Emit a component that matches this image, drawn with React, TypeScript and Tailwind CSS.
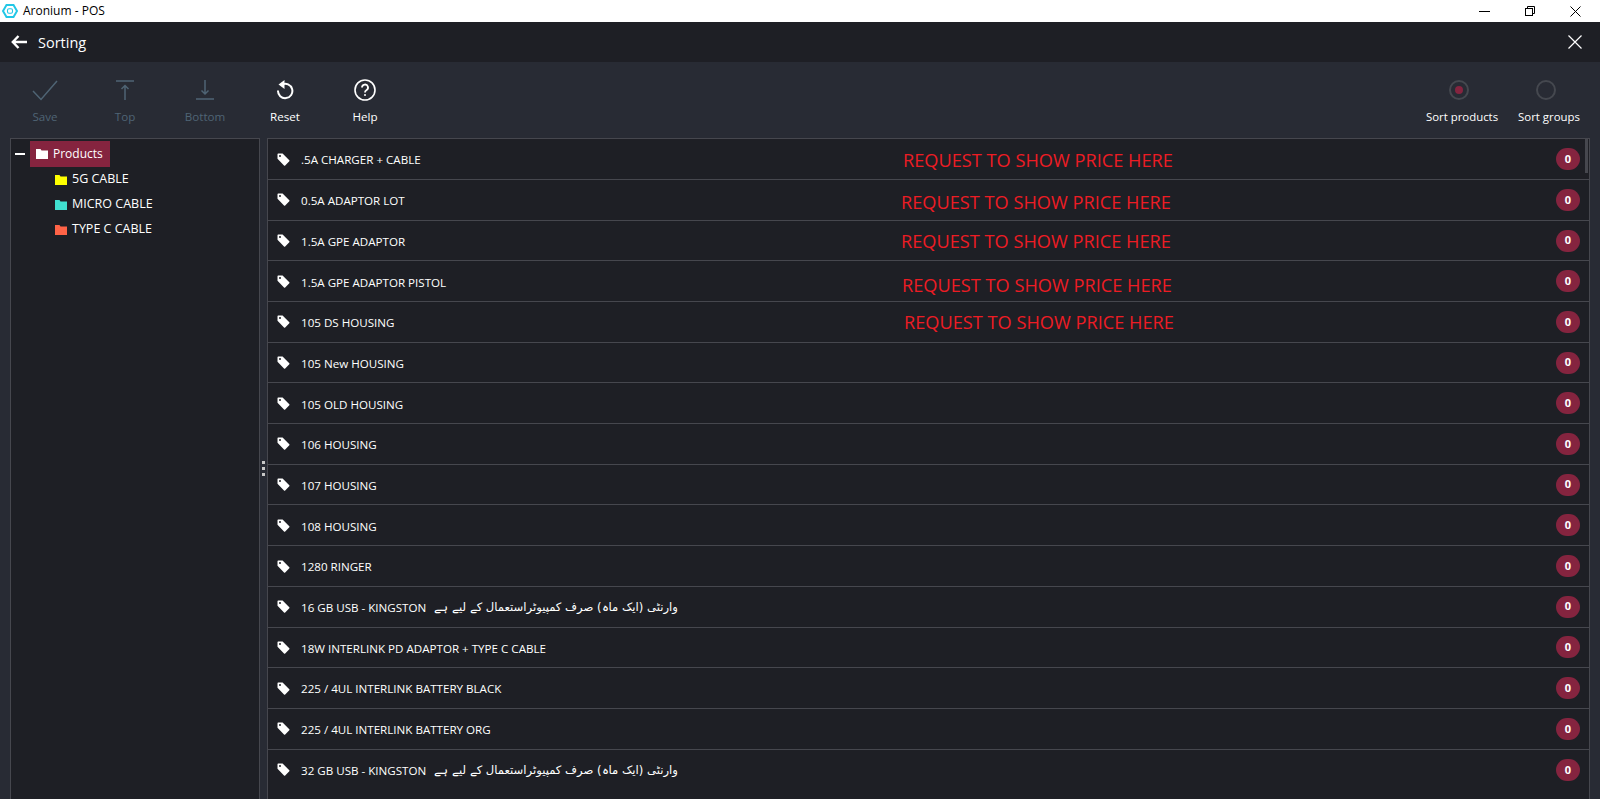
import * as React from 'react';

const URDU = 'وارنٹی (ایک ماہ) صرف کمپیوٹراستعمال کے لیے ہے';

const products: { name: string; note?: boolean }[] = [
    { name: '.5A CHARGER + CABLE' },
    { name: '0.5A ADAPTOR LOT' },
    { name: '1.5A GPE ADAPTOR' },
    { name: '1.5A GPE ADAPTOR PISTOL' },
    { name: '105 DS HOUSING' },
    { name: '105 New HOUSING' },
    { name: '105 OLD HOUSING' },
    { name: '106 HOUSING' },
    { name: '107 HOUSING' },
    { name: '108 HOUSING' },
    { name: '1280 RINGER' },
    { name: '16 GB USB - KINGSTON', note: true },
    { name: '18W INTERLINK PD ADAPTOR + TYPE C CABLE' },
    { name: '225 / 4UL INTERLINK BATTERY BLACK' },
    { name: '225 / 4UL INTERLINK BATTERY ORG' },
    { name: '32 GB USB - KINGSTON', note: true },
];

// red annotations pasted over the list in the screenshot
const overlays = [
    { left: 'left-[903px]', top: 'top-[148px]' },
    { left: 'left-[901px]', top: 'top-[190px]' },
    { left: 'left-[901px]', top: 'top-[229px]' },
    { left: 'left-[902px]', top: 'top-[273px]' },
    { left: 'left-[904px]', top: 'top-[310px]' },
];

function FolderIcon({ className }: { className: string }) {
    return (
        <svg width="12" height="10" viewBox="0 0 12 10" className={className}>
            <path d="M0 0h4.5l1 1.5H12V10H0z" fill="currentColor" />
        </svg>
    );
}

function TagIcon() {
    return (
        <svg width="13" height="13" viewBox="0 0 13 13" className="shrink-0 text-white">
            <path
                d="M0.5 1.2 Q0.5 0.5 1.2 0.5 H5.6 L12.3 7.2 Q12.8 7.8 12.3 8.3 L8.2 12.4 Q7.6 12.9 7 12.4 L0.5 5.8 Z M3 2 A1 1 0 1 0 3 4 A1 1 0 1 0 3 2 Z"
                fill="currentColor"
                fillRule="evenodd"
            />
        </svg>
    );
}

function SaveIcon() {
    return (
        <svg width="26" height="21" viewBox="0 0 26 21" fill="none" stroke="currentColor" strokeWidth="1.5">
            <path d="M1 11 L9 19.5 L25 1" />
        </svg>
    );
}

function TopIcon() {
    return (
        <svg width="18" height="20" viewBox="0 0 18 20" fill="none" stroke="currentColor" strokeWidth="1.5">
            <path d="M0 1 H18" />
            <path d="M9 20 V5.5 M5.5 9 L9 5.5 L12.5 9" />
        </svg>
    );
}

function BottomIcon() {
    return (
        <svg width="18" height="20" viewBox="0 0 18 20" fill="none" stroke="currentColor" strokeWidth="1.5">
            <path d="M0 19 H18" />
            <path d="M9 0 V14 M5.5 10.5 L9 14 L12.5 10.5" />
        </svg>
    );
}

function ResetIcon() {
    return (
        <svg width="18" height="20" viewBox="0 0 18 20">
            <path d="M6 4.5 A7.2 7.2 0 1 1 2 10.5" fill="none" stroke="currentColor" strokeWidth="2" />
            <path d="M8.5 0 V9 L2.5 4.5 Z" fill="currentColor" />
        </svg>
    );
}

function HelpIcon() {
    return (
        <svg width="22" height="22" viewBox="0 0 22 22" fill="none" stroke="currentColor" strokeWidth="1.6">
            <circle cx="11" cy="11" r="10" />
            <path d="M8 8.6 A3 3 0 1 1 12.4 11.2 Q11 12 11 13.4" strokeWidth="1.8" />
            <circle cx="11" cy="16" r="1" fill="currentColor" stroke="none" />
        </svg>
    );
}

function ToolButton({ icon, label, disabled }: { icon: React.ReactNode; label: string; disabled?: boolean }) {
    return (
        <div className={`flex w-20 flex-col items-center ${disabled ? 'text-[#4f6474]' : 'text-white'}`}>
            <div className="flex h-[22px] items-center justify-center">{icon}</div>
            <span className="mt-[8px] text-[11.6px] font-medium leading-4">{label}</span>
        </div>
    );
}

function RadioButton({ label, checked, className }: { label: string; checked?: boolean; className: string }) {
    return (
        <div className={`mt-[1px] flex flex-col items-center text-white ${className}`}>
            <div className="mr-[6px] flex h-5 w-5 items-center justify-center rounded-full border-2 border-[#45484f]">
                {checked ? <div className="h-2 w-2 rounded-full bg-[#85243f]" /> : null}
            </div>
            <span className="mt-[9px] text-[11.4px] leading-4">{label}</span>
        </div>
    );
}

function TreeChild({ name, color }: { name: string; color: string }) {
    return (
        <div className="flex h-[25px] items-center pl-[44px]">
            <FolderIcon className={color} />
            <span className="ml-[5px] text-[12.5px] text-white">{name}</span>
        </div>
    );
}

function ProductRow({ name, note, last }: { name: string; note?: boolean; last?: boolean }) {
    return (
        <div
            className={`relative flex h-[40.7px] shrink-0 items-center pl-[9px] pr-[9px] ${
                last ? '' : 'border-b border-[#46474e]'
            }`}
        >
            <div className="flex w-[24px] shrink-0">
                <TagIcon />
            </div>
            <span className="mt-[2px] text-[11.6px] text-white">{name}</span>
            {note ? (
                <span dir="rtl" className="ml-[8px] mt-[2px] font-['DejaVu_Sans',sans-serif] text-[11.6px] text-white">
                    {URDU}
                </span>
            ) : null}
            <div className="ml-auto flex h-[22px] w-6 items-center justify-center rounded-full bg-[#85243f] text-[11px] font-bold text-white">
                0
            </div>
        </div>
    );
}

export default function App() {
    return (
        <div className="relative flex h-[799px] w-[1600px] flex-col overflow-hidden bg-[#282b34] font-['Open_Sans',sans-serif]">
            <div className="flex h-[22px] shrink-0 items-center bg-white pl-[2px] text-black">
                <svg width="16" height="14" viewBox="0 0 16 14" className="text-[#22c7e6]">
                    <path d="M4.5 1 H11.5 L15 7 L11.5 13 H4.5 L1 7 Z" fill="none" stroke="currentColor" strokeWidth="2" />
                    <rect x="5.5" y="4.7" width="5" height="4.6" rx="1.5" fill="none" stroke="currentColor" strokeWidth="1.1" />
                </svg>
                <span className="ml-[5px] text-[12px]">Aronium - POS</span>
                <div className="ml-auto flex items-center">
                    <svg width="11" height="11" viewBox="0 0 11 11" className="mr-[35px] stroke-black" fill="none">
                        <path d="M0 5.5 H11" />
                    </svg>
                    <svg width="10" height="10" viewBox="0 0 10 10" className="mr-[35px] stroke-black" fill="none">
                        <rect x="0.5" y="2.5" width="7" height="7" />
                        <path d="M2.5 2.5 V0.5 H9.5 V7.5 H7.5" />
                    </svg>
                    <svg width="11" height="11" viewBox="0 0 11 11" className="mr-[19px] stroke-black" fill="none">
                        <path d="M0.5 0.5 L10.5 10.5 M10.5 0.5 L0.5 10.5" />
                    </svg>
                </div>
            </div>

            <div className="flex h-[40px] shrink-0 items-center bg-[#1e1f25] pl-[11px] pr-[18px] text-white">
                <svg width="16" height="14" viewBox="0 0 16 14" fill="none" stroke="currentColor" strokeWidth="2.4">
                    <path d="M16 7 H2 M7.5 1 L1.8 7 L7.5 13" />
                </svg>
                <span className="ml-[11px] mt-[2px] text-[14.5px]">Sorting</span>
                <svg width="14" height="14" viewBox="0 0 14 14" fill="none" stroke="currentColor" className="ml-auto" strokeWidth="1.2">
                    <path d="M0.5 0.5 L13.5 13.5 M13.5 0.5 L0.5 13.5" />
                </svg>
            </div>

            <div className="flex h-[76px] shrink-0 items-start pl-[5px] pt-[17px]">
                <ToolButton label="Save" disabled icon={<SaveIcon />} />
                <ToolButton label="Top" disabled icon={<TopIcon />} />
                <ToolButton label="Bottom" disabled icon={<BottomIcon />} />
                <ToolButton label="Reset" icon={<ResetIcon />} />
                <ToolButton label="Help" icon={<HelpIcon />} />
                <RadioButton label="Sort products" checked className="ml-auto mr-[2px] w-[90px]" />
                <RadioButton label="Sort groups" className="mr-[11px] w-[80px]" />
            </div>

            <div className="flex min-h-0 flex-1 pl-[10px] pr-[10px]">
                <div className="w-[250px] shrink-0 border-l border-r border-t border-[#46474e] bg-[#1e1f25] pt-[2px]">
                    <div className="flex items-center">
                        <div className="ml-[4px] h-[2px] w-[10px] bg-white" />
                        <div className="ml-[5px] flex h-[26px] w-[80px] items-center bg-[#85243f] pl-[6px] text-white">
                            <FolderIcon className="text-white" />
                            <span className="ml-[5px] text-xs">Products</span>
                        </div>
                    </div>
                    <TreeChild name="5G CABLE" color="text-[#ffff00]" />
                    <TreeChild name="MICRO CABLE" color="text-[#40e0d0]" />
                    <TreeChild name="TYPE C CABLE" color="text-[#ff6347]" />
                </div>

                <div className="flex w-[7px] shrink-0 flex-col items-center justify-center gap-[3px]">
                    <div className="h-[3px] w-[3px] bg-[#c8c8c8]" />
                    <div className="h-[3px] w-[3px] bg-[#c8c8c8]" />
                    <div className="h-[3px] w-[3px] bg-[#c8c8c8]" />
                </div>

                <div className="relative flex min-w-0 flex-1 flex-col border-l border-r border-t border-[#46474e] bg-[#1e1f25] pt-[0.3px]">
                    {products.map((product, index) => (
                        <ProductRow
                            key={product.name}
                            name={product.name}
                            note={product.note}
                            last={index === products.length - 1}
                        />
                    ))}
                    <div className="absolute right-[1px] top-0 h-[34px] w-[3px] bg-[#46474e]" />
                </div>
            </div>

            {overlays.map((overlay) => (
                <span
                    key={overlay.top}
                    className={`absolute whitespace-nowrap text-[18.2px] leading-6 text-[#ed1c24] ${overlay.left} ${overlay.top}`}
                >
                    REQUEST TO SHOW PRICE HERE
                </span>
            ))}
        </div>
    );
}
